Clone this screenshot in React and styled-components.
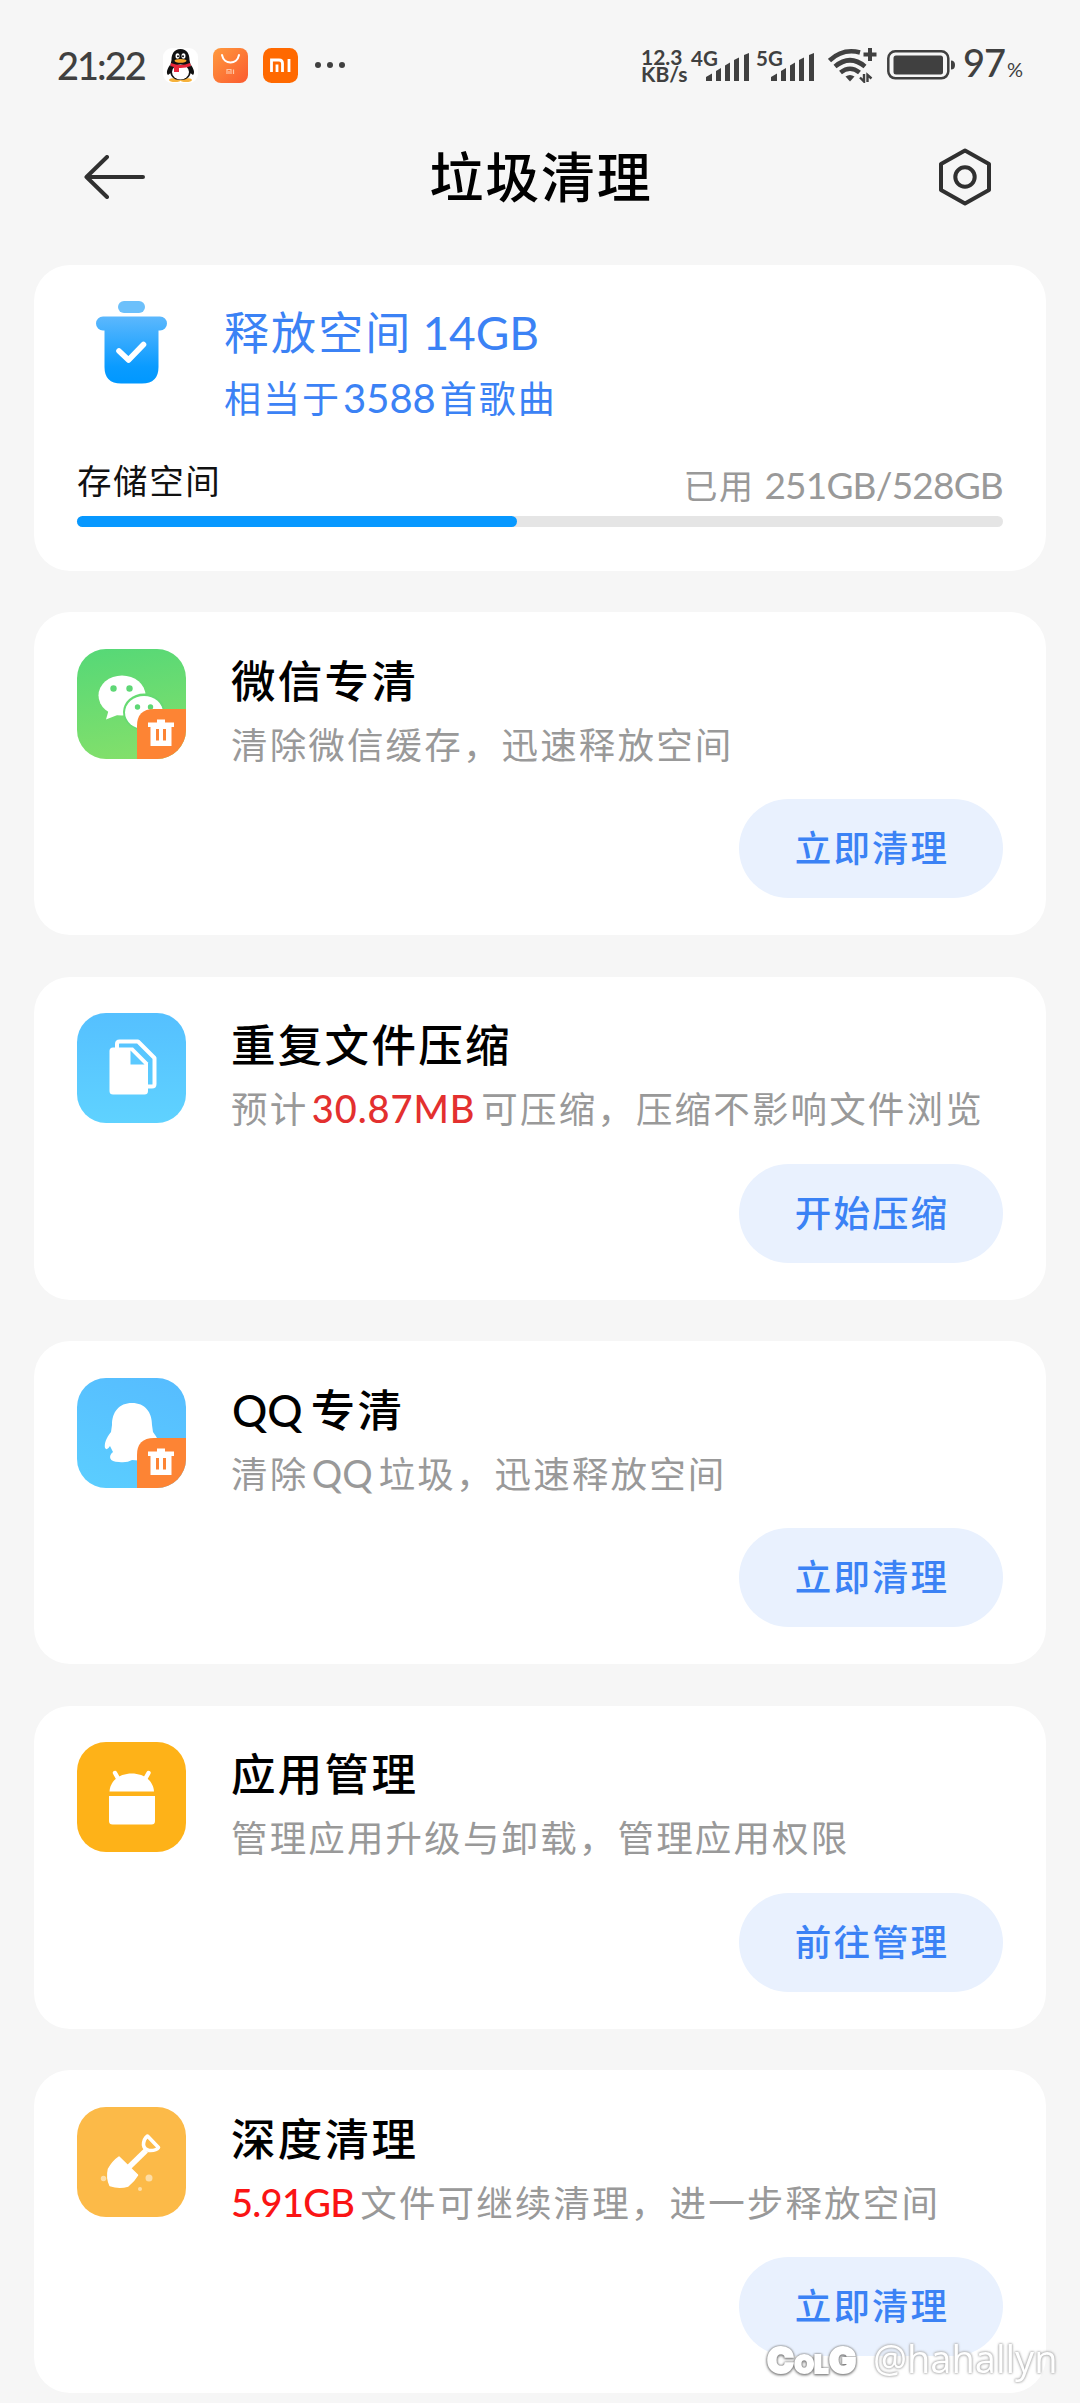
import React from "react";
import styled, { createGlobalStyle } from "styled-components";

const features = [
  {
    icon: "wechat",
    title: "微信专清",
    desc: [{ text: "清除微信缓存，迅速释放空间" }],
    action: "立即清理",
  },
  {
    icon: "files",
    title: "重复文件压缩",
    desc: [
      { text: "预计" },
      { text: "30.87MB", color: "#e3302f", spacing: 0.9 },
      { text: "可压缩，压缩不影响文件浏览" },
    ],
    action: "开始压缩",
  },
  {
    icon: "qq",
    latin: "QQ",
    title: "专清",
    desc: [
      { text: "清除" },
      { text: "QQ", spacing: 0 },
      { text: "垃圾，迅速释放空间" },
    ],
    action: "立即清理",
  },
  {
    icon: "apps",
    title: "应用管理",
    desc: [{ text: "管理应用升级与卸载，管理应用权限" }],
    action: "前往管理",
  },
  {
    icon: "shovel",
    title: "深度清理",
    desc: [
      { text: "5.91GB", color: "#fa1414", spacing: -0.7, first: true },
      { text: "文件可继续清理，进一步释放空间" },
    ],
    action: "立即清理",
  },
];

const storage = { used: 251, total: 528 };

function PenguinApp() {
  return (
    <svg width="35" height="35" viewBox="0 0 35 35">
      <rect width="35" height="35" rx="9" fill="#fff" />
      <ellipse cx="12" cy="32" rx="6" ry="2" fill="#f6b23c" />
      <ellipse cx="23" cy="32" rx="6" ry="2" fill="#f6b23c" />
      <path d="M7 17C4 21 3 25 5 27L9 24ZM28 17C31 21 32 25 30 27L26 24Z" fill="#111" />
      <path d="M17.5 1C11 1 8.500 6 8.500 12L7 19C6 29 11 32 17.500 32S29 29 28 19L26.500 12C26.500 6 24 1 17.500 1Z" fill="#111" />
      <ellipse cx="17.500" cy="24" rx="8.500" ry="7.600" fill="#fff" />
      <ellipse cx="14.500" cy="8" rx="2" ry="2.800" fill="#fff" />
      <ellipse cx="20.500" cy="8" rx="2" ry="2.800" fill="#fff" />
      <circle cx="15" cy="8.300" r="1" fill="#111" />
      <circle cx="20" cy="8.300" r="1" fill="#111" />
      <ellipse cx="17.500" cy="12.800" rx="6" ry="1.900" fill="#f6a72c" />
      <path d="M8 15Q17.500 19 27 15L28 18Q17.500 22 7.500 18ZM11 18H16V24H11Z" fill="#e7263a" />
    </svg>
  );
}

function StoreApp() {
  return (
    <svg width="35" height="35" viewBox="0 0 35 35">
      <defs>
        <linearGradient id="store" x1="0" y1="0" x2="1" y2="1">
          <stop offset="0" stopColor="#ff9a3d" />
          <stop offset="1" stopColor="#fb5a30" />
        </linearGradient>
      </defs>
      <rect width="35" height="35" rx="8" fill="url(#store)" />
      <path d="M9 7C11 17 24 17 26 7" fill="none" stroke="#fff" strokeWidth="2" strokeLinecap="round" />
      <path d="M14 26V21.500H18V26M16 23V26M20.500 21.500V26" fill="none" stroke="#ffc5a5" strokeWidth="1.200" />
    </svg>
  );
}

function MiApp() {
  return (
    <svg width="35" height="35" viewBox="0 0 35 35">
      <rect width="35" height="35" rx="8.500" fill="#ff6900" />
      <path
        d="M8.500 24V12H16Q19.500 12 19.500 15.500V24M14 16.500V24M26 11V24"
        fill="none"
        stroke="#fff"
        strokeWidth="2.800"
      />
    </svg>
  );
}

function Signal() {
  return (
    <svg width="44" height="28" viewBox="0 0 44 28">
      <g fill="#404040">
        <path d="M0 28V24L6 20.500V28Z" />
        <path d="M10 28V18L15 15V28Z" />
        <path d="M19 28V12.500L24 9.500V28Z" />
        <path d="M28 28V7L33 4.500V28Z" />
        <path d="M38 28V2L43 0V28Z" />
      </g>
    </svg>
  );
}

function Wifi() {
  return (
    <svg width="49" height="35" viewBox="0 0 49 35">
      <g fill="none" stroke="#404040" strokeWidth="4.600">
        <path d="M1.500 12.500Q15 0 32 4.500" />
        <path d="M7 18.500Q22 6 37 18.500" />
        <path d="M12.500 24.500Q22 17 31.500 24.500" />
      </g>
      <path d="M42 0V13M35.500 6.500H48.500" stroke="#404040" strokeWidth="4" />
      <path d="M17.500 28.500Q22 25.500 26.500 28.500L22 33.500Z" fill="#404040" />
      <path d="M36 26V33.500L32 29.500M39.500 34V27L43.500 30.500" fill="none" stroke="#404040" strokeWidth="2.400" />
    </svg>
  );
}

function Battery() {
  return (
    <svg width="69" height="30" viewBox="0 0 69 30">
      <rect x="1.300" y="1.300" width="60" height="27" rx="7" fill="none" stroke="#404040" strokeWidth="2.500" />
      <rect x="6.500" y="5.500" width="49.500" height="19" rx="2.500" fill="#404040" />
      <path d="M64 10.500Q68 10.500 68 15T64 19.500Z" fill="#404040" />
    </svg>
  );
}

function BackArrow() {
  return (
    <svg width="62" height="44" viewBox="0 0 62 44">
      <path
        d="M23 2L2.500 22L23 42M2.500 22H59"
        fill="none"
        stroke="#303030"
        strokeWidth="4"
        strokeLinecap="round"
        strokeLinejoin="round"
      />
    </svg>
  );
}

function Settings() {
  return (
    <svg width="54" height="58" viewBox="0 0 54 58">
      <path
        d="M27 2.500L51 16V42L27 55.500L3 42V16Z"
        fill="none"
        stroke="#303030"
        strokeWidth="4"
        strokeLinejoin="round"
      />
      <circle cx="27" cy="29" r="9.700" fill="none" stroke="#303030" strokeWidth="4" />
    </svg>
  );
}

function Bin() {
  return (
    <svg width="71" height="83" viewBox="0 0 71 83">
      <defs>
        <linearGradient id="bin" x1="0" y1="0" x2="0" y2="1">
          <stop offset="0" stopColor="#5cb8fd" />
          <stop offset="0.750" stopColor="#0a9bff" />
          <stop offset="1" stopColor="#0098ff" />
        </linearGradient>
      </defs>
      <rect x="22" width="27" height="12" rx="6" fill="#6cc0fb" />
      <path
        d="M7 15.500H64A6.800 6.800 0 0 1 64 29.500H62.500V66Q62.500 82.500 46 82.500H25Q8.500 82.500 8.500 66V29.500H7A6.800 6.800 0 0 1 7 15.500Z"
        fill="url(#bin)"
      />
      <path
        d="M23 50L32.500 59L47.500 43.500"
        fill="none"
        stroke="#fff"
        strokeWidth="5.600"
        strokeLinecap="round"
        strokeLinejoin="round"
      />
    </svg>
  );
}

function CleanBadge() {
  return (
    <g>
      <path d="M60 110V77Q60 60 77 60H110V110Z" fill="#fd8434" />
      <path d="M71 73.500H80V70.500H88V73.500H97V78H94.500V97H73.500V78H71Z" fill="#fff" />
      <path d="M80.500 80V91.500M87.500 80V91.500" stroke="#fd8434" strokeWidth="3" />
    </g>
  );
}

const art = {
  wechat: (
    <>
      <ellipse cx="45" cy="46.500" rx="23.500" ry="20" fill="#fff" />
      <path d="M32 60L29 70.500L43 65Z" fill="#fff" />
      <ellipse cx="67" cy="63" rx="21" ry="18.500" fill="#66da72" />
      <ellipse cx="67" cy="63.500" rx="19" ry="16.500" fill="#fff" />
      <g fill="#5ed775">
        <circle cx="36.500" cy="39.500" r="3.200" />
        <circle cx="52.500" cy="39.500" r="3.200" />
        <circle cx="60.500" cy="58" r="2.700" />
        <circle cx="73.500" cy="58" r="2.700" />
      </g>
      <CleanBadge />
    </>
  ),
  files: (
    <>
      <path
        d="M40 35V31Q40 28.500 42.500 28.500H61L77.500 45V71Q77.500 73.500 75 73.500H71"
        fill="none"
        stroke="#fff"
        strokeWidth="4"
        strokeLinejoin="round"
      />
      <path
        d="M36 34.500H56L71 49.500V78Q71 81.500 67.500 81.500H36Q32.500 81.500 32.500 78V38Q32.500 34.500 36 34.500Z"
        fill="#fff"
      />
      <path d="M53.500 37.500V51.500H67.500Z" fill="#5bc9ff" />
    </>
  ),
  qq: (
    <>
      <path
        d="M55 25C42 25 35 34 35 47L34 54C29 60 27 66 28 70Q30 73 33 68L36 74C31 78 32 84 42 84Q50 85 55 82L68 83L84 70C83 65 80 59 76 54L75 47C75 34 68 25 55 25Z"
        fill="#fff"
      />
      <CleanBadge />
    </>
  ),
  apps: (
    <>
      <path d="M38 31L42 38M71.500 31L67.500 38" stroke="#fff" strokeWidth="4.400" strokeLinecap="round" />
      <path d="M32.500 49.500C34 25.500 75.500 25.500 77 49.500Z" fill="#fff" />
      <path d="M32 54H78V79Q78 82.500 74.500 82.500H35.500Q32 82.500 32 79Z" fill="#fff" />
    </>
  ),
  shovel: (
    <>
      <path
        d="M42 50L60.500 68Q57 74 51 79Q42 81.500 33 78.500Q29.500 71 31.500 62Q36 54 42 50Z"
        fill="#fff"
        stroke="#fff"
        strokeWidth="1.500"
        strokeLinejoin="round"
      />
      <path d="M50 62L69 43.500" stroke="#fff" strokeWidth="5.500" />
      <path
        d="M70.500 29L81.500 40.500Q79 44 72 43.500Q67 42 66.500 38Q66.500 32 70.500 29Z"
        fill="none"
        stroke="#fff"
        strokeWidth="3.600"
        strokeLinejoin="round"
      />
      <g fill="#fddda5">
        <circle cx="26.500" cy="71.500" r="2.700" />
        <circle cx="72" cy="71" r="3.500" />
        <circle cx="63" cy="82" r="2" />
      </g>
    </>
  ),
};

function FeatureIcon({ name }) {
  return (
    <IconTile $name={name}>
      <svg width="110" height="110" viewBox="0 0 110 110">
        {art[name]}
      </svg>
    </IconTile>
  );
}

export default function App() {
  return (
    <Page lang="zh-CN">
      <GlobalStyle />
      <StatusBar>
        <Time>21:22</Time>
        <AppIcons>
          <PenguinApp />
          <StoreApp />
          <MiApp />
        </AppIcons>
        <More>
          <i />
          <i />
          <i />
        </More>
        <Speed>
          <span>12.3</span>
          <span>KB/s</span>
        </Speed>
        <Network>
          <NetLabel>4G</NetLabel>
          <Signal />
        </Network>
        <Network>
          <NetLabel>5G</NetLabel>
          <Signal />
        </Network>
        <WifiBox>
          <Wifi />
        </WifiBox>
        <Battery />
        <Percent>
          97<small>%</small>
        </Percent>
      </StatusBar>
      <Header>
        <BackArrow />
        <PageTitle>垃圾清理</PageTitle>
        <Settings />
      </Header>
      <List>
        <SummaryCard>
          <SummaryTop>
            <Bin />
            <SummaryText>
              <Headline>
                释放空间<Latin $size={46} $left={10}>14GB</Latin>
              </Headline>
              <Subline>
                相当于<Latin $size={40} $left={2} $right={4}>3588</Latin>首歌曲
              </Subline>
            </SummaryText>
          </SummaryTop>
          <StorageRow>
            <StorageLabel>存储空间</StorageLabel>
            <StorageUsed>
              已用
              <Latin $size={37} $left={10} $spacing={-0.8}>
                {storage.used}GB/{storage.total}GB
              </Latin>
            </StorageUsed>
          </StorageRow>
          <Track>
            <Fill style={{ width: `${(storage.used / storage.total) * 100}%` }} />
          </Track>
        </SummaryCard>
        {features.map((f) => (
          <Card key={f.icon}>
            <FeatureIcon name={f.icon} />
            <CardBody>
              <CardTitle>
                {f.latin && (
                  <Latin $size={44} $weight={500} $left={1} $right={8}>
                    {f.latin}
                  </Latin>
                )}
                {f.title}
              </CardTitle>
              <Desc>
                {f.desc.map((d) =>
                  d.spacing === undefined ? (
                    <span key={d.text}>{d.text}</span>
                  ) : (
                    <Latin
                      key={d.text}
                      $size={38}
                      $color={d.color}
                      $weight={d.color ? 500 : 400}
                      $spacing={d.spacing}
                      $left={d.first ? 0 : 3.5}
                      $right={6}
                    >
                      {d.text}
                    </Latin>
                  )
                )}
              </Desc>
              <Action>{f.action}</Action>
            </CardBody>
          </Card>
        ))}
      </List>
      <Watermark>
        <Brand>
          C<small>OL</small>G
        </Brand>
        <Author>@hahallyn</Author>
      </Watermark>
    </Page>
  );
}

const GlobalStyle = createGlobalStyle`
  body {
    margin: 0;
    background: #f6f6f6;
  }
  * {
    box-sizing: border-box;
  }
  svg {
    display: block;
    flex-shrink: 0;
  }
`;
const Page = styled.div`
  position: relative;
  width: 1080px;
  height: 2403px;
  overflow: hidden;
  background: #f6f6f6;
  font-family: "Noto Sans CJK SC", sans-serif;
  white-space: nowrap;
`;
const StatusBar = styled.div`
  display: flex;
  align-items: center;
  height: 130px;
  padding-left: 57px;
  color: #404040;
  font-family: Lato, sans-serif;
`;
const Time = styled.div`
  width: 106px;
  font-size: 38px;
  line-height: 40px;
  letter-spacing: -2px;
  font-weight: 500;
`;
const AppIcons = styled.div`
  display: flex;
  gap: 15px;
`;
const More = styled.div`
  display: flex;
  gap: 6px;
  width: 343px;
  padding-left: 17px;
  i {
    width: 6px;
    height: 6px;
    border-radius: 50%;
    background: #404040;
  }
`;
const Speed = styled.div`
  display: flex;
  flex-direction: column;
  width: 50px;
  font-size: 21px;
  line-height: 17px;
  font-weight: 700;
`;
const Network = styled.div`
  display: flex;
  align-items: flex-end;
  width: 65px;
  height: 32px;
`;
const NetLabel = styled.div`
  width: 15px;
  height: 32px;
  font-size: 20.5px;
  line-height: 18px;
  font-weight: 700;
`;
const WifiBox = styled.div`
  width: 59px;
  margin-left: 7px;
`;
const Percent = styled.div`
  margin-left: 7px;
  font-size: 38px;
  line-height: 40px;
  font-weight: 500;
  letter-spacing: -1px;
  small {
    font-size: 20px;
    font-weight: 400;
    margin-left: 2px;
  }
`;
const Header = styled.div`
  display: flex;
  align-items: center;
  justify-content: space-between;
  height: 94px;
  padding: 0 88px 0 84px;
`;
const PageTitle = styled.h1`
  margin: 0 2px 0 0;
  padding-bottom: 4px;
  font-size: 54px;
  line-height: 80px;
  font-weight: 500;
  letter-spacing: 1.8px;
`;
const List = styled.div`
  display: flex;
  flex-direction: column;
  gap: 41.5px;
  padding: 41px 34px 0;
`;
const SummaryCard = styled.div`
  height: 305.5px;
  padding: 36px 43px 0;
  border-radius: 36px;
  background: #fff;
`;
const SummaryTop = styled.div`
  display: flex;
  gap: 57px;
  height: 147px;
  padding-left: 19px;
`;
const SummaryText = styled.div`
  display: flex;
  flex-direction: column;
  color: #3b82f5;
`;
const Headline = styled.div`
  height: 66px;
  font-size: 45px;
  line-height: 60px;
  letter-spacing: 2.1px;
`;
const Subline = styled.div`
  font-size: 37px;
  line-height: 60px;
  letter-spacing: 2px;
`;
const StorageRow = styled.div`
  display: flex;
  justify-content: space-between;
  height: 68px;
`;
const StorageLabel = styled.div`
  color: #111;
  font-size: 34.5px;
  line-height: 62px;
  letter-spacing: 1.6px;
`;
const StorageUsed = styled.div`
  color: #999;
  font-size: 34px;
  line-height: 73px;
  letter-spacing: 1.5px;
`;
const Track = styled.div`
  height: 11px;
  border-radius: 6px;
  background: #e5e5e5;
`;
const Fill = styled.div`
  height: 100%;
  border-radius: 6px;
  background: #0798ff;
`;
const Latin = styled.span`
  font-family: Lato, sans-serif;
  font-size: ${(p) => p.$size}px;
  font-weight: ${(p) => p.$weight || 400};
  line-height: 1;
  letter-spacing: ${(p) => p.$spacing || 0}px;
  margin-left: ${(p) => p.$left || 0}px;
  margin-right: ${(p) => p.$right || 0}px;
  color: ${(p) => p.$color || "inherit"};
`;
const Card = styled.div`
  display: flex;
  gap: 45px;
  height: 323px;
  padding: 36.5px 43px 0 42.5px;
  border-radius: 36px;
  background: #fff;
`;
const tileColors = {
  wechat: "linear-gradient(170deg, #55d877, #86e06a)",
  files: "linear-gradient(#55c0ff, #5fd2ff)",
  qq: "linear-gradient(200deg, #56bcff, #5bceff)",
  apps: "#feb218",
  shovel: "#fcba48",
};
const IconTile = styled.div`
  flex-shrink: 0;
  width: 109.5px;
  height: 110px;
  border-radius: 29px;
  overflow: hidden;
  background: ${(p) => tileColors[p.$name]};
`;
const CardBody = styled.div`
  flex: 1;
  display: flex;
  flex-direction: column;
`;
const CardTitle = styled.div`
  height: 63px;
  color: #000;
  font-size: 44.5px;
  line-height: 60px;
  font-weight: 500;
  letter-spacing: 2.3px;
`;
const Desc = styled.div`
  height: 87.5px;
  color: #999;
  font-size: 36.5px;
  line-height: 64px;
  letter-spacing: 2.15px;
`;
const Action = styled.button`
  align-self: flex-end;
  width: 264px;
  height: 99px;
  padding: 0 0 4px 2px;
  border: none;
  border-radius: 50px;
  background: #e9f1fe;
  color: #3b82f5;
  font-family: inherit;
  font-size: 36.5px;
  font-weight: 500;
  letter-spacing: 2.1px;
`;
const Watermark = styled.div`
  position: absolute;
  left: 767px;
  top: 2335px;
  display: flex;
  align-items: center;
  gap: 5px;
  height: 50px;
  color: #fff;
`;
const Brand = styled.div`
  width: 101px;
  padding-top: 4px;
  font-family: Inter, sans-serif;
  font-size: 36px;
  font-weight: 900;
  line-height: 50px;
  letter-spacing: 0.5px;
  -webkit-text-stroke: 2px #fff;
  filter: drop-shadow(0 0 1px #777) drop-shadow(0 1px 1px #888);
  small {
    font-size: 25px;
  }
`;
const Author = styled.div`
  font-family: "Open Sans", sans-serif;
  font-size: 38px;
  line-height: 46px;
  padding-bottom: 4px;
  filter: drop-shadow(0 0 1px #aaa) drop-shadow(0 0 1px #bbb);
`;
